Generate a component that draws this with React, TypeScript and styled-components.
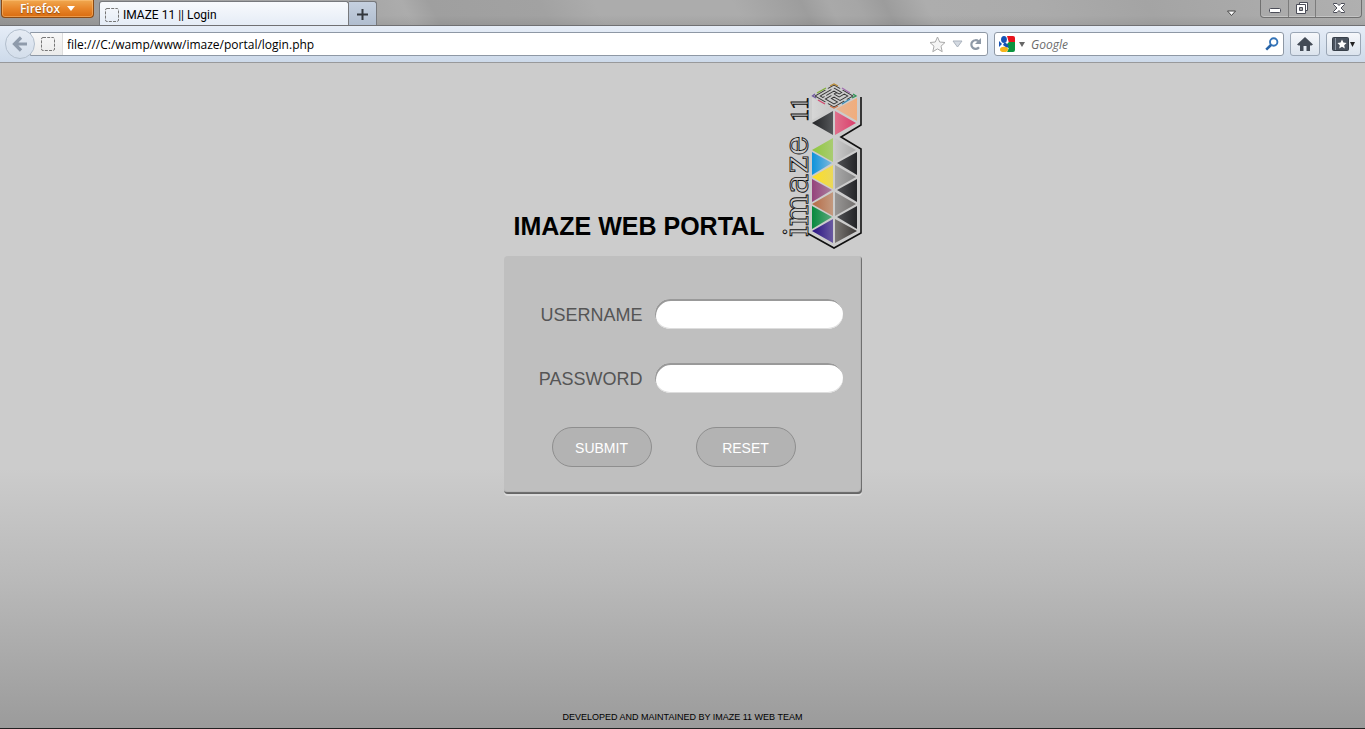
import React from "react";
import styled, { createGlobalStyle } from "styled-components";

const GlobalStyle = createGlobalStyle`
  * { box-sizing: border-box; }
  html, body { margin: 0; padding: 0; }
  body { font-family: "Liberation Sans", Arial, sans-serif; color: #000; }
  button, input { font: inherit; margin: 0; }
  svg { display: block; flex: none; overflow: visible; }
`;

const Window = styled.div`
  min-height: 100vh;
  display: flex;
  flex-direction: column;
`;

const TitleBar = styled.header`
  height: 26px;
  display: flex;
  align-items: flex-start;
  border-bottom: 1px solid #707073;
  font-family: "Open Sans", sans-serif;
  background:
    linear-gradient(to bottom, transparent 60%, rgba(0, 0, 0, 0.06)),
    linear-gradient(63deg, #9a9a9a 0%, #a8a8a8 28%, #acacac 30%, #9f9f9f 32%, #a2a2a2 40%, #acacac 44%,
      #acacac 54%, #9d9d9d 59%, #a9a9a9 61%, #a6a6a6 63%, #9c9c9c 65%, #adadad 68%, #ababab 76%, #a4a4a4 84%, #b0b0b0 100%);
`;

const FirefoxButton = styled.button`
  width: 93px;
  height: 18px;
  margin-left: 1px;
  padding: 0;
  display: flex;
  align-items: center;
  justify-content: center;
  gap: 7px;
  border: 1px solid #8a4a14;
  border-top: 0;
  border-radius: 0 0 4px 4px;
  background: linear-gradient(#f0a850, #e8862a 50%, #d96b10);
  box-shadow: inset 0 0 0 1px rgba(255, 200, 130, 0.5);
  color: #fff;
  font-size: 12px;
  line-height: 17px;
  font-weight: 600;
  text-shadow: 0 1px 1px #8a4a14;
`;

const Tab = styled.div`
  width: 250px;
  height: 24px;
  margin: 1px 0 0 5px;
  padding: 2px 5px 0;
  display: flex;
  align-items: center;
  gap: 4px;
  flex: none;
  border: 1px solid #77797d;
  border-bottom: 0;
  border-radius: 3px 3px 0 0;
  background: linear-gradient(#f8fafd, #e5ecf6);
  font-family: Roboto, sans-serif;
  font-size: 12px;
  line-height: 16px;
`;

const NewTab = styled.button`
  width: 28px;
  height: 24px;
  margin-top: 1px;
  padding: 1px 0 0;
  display: grid;
  place-items: center;
  border: 1px solid #77797d;
  border-left: 0;
  border-bottom: 0;
  border-radius: 0 3px 0 0;
  background: linear-gradient(#c5d0df, #b0bdcf);
`;

const Spacer = styled.div`
  flex: 1;
`;

const TabsMenu = styled.button`
  margin: 10px 23px 0 0;
  padding: 0;
  border: 0;
  background: none;
`;

const WindowControls = styled.div`
  display: flex;
  height: 18px;
  margin-right: 3px;
  border: 1px solid #707070;
  border-top: 0;
  border-radius: 0 0 4px 4px;
  box-shadow: inset 0 -1px 0 #c4c4c4;
`;

const ControlButton = styled.button<{ $width: number }>`
  width: ${(p) => p.$width}px;
  padding: 0;
  display: grid;
  place-items: center;
  border: 0;
  background: none;
  & + & { border-left: 1px solid #7c7c7c; }
`;

const Toolbar = styled.nav`
  height: 37px;
  padding: 0 4px 0 5px;
  display: flex;
  align-items: center;
  border-bottom: 1px solid #98999b;
  background: linear-gradient(#e6edf7, #cddaea);
  font-family: "Open Sans", sans-serif;
  font-size: 12px;
  line-height: 16px;
`;

const BackButton = styled.button`
  width: 30px;
  height: 30px;
  margin-right: -5px;
  padding: 0;
  display: grid;
  place-items: center;
  flex: none;
  position: relative;
  border: 1px solid #b3bfcd;
  border-radius: 50%;
  background: linear-gradient(#e6ecf4, #d3deeb);
`;

const AddressBar = styled.div`
  height: 24px;
  flex: 1;
  display: flex;
  align-items: center;
  border: 1px solid #8e98a5;
  border-radius: 0 3px 3px 0;
  background: #fff;
  overflow: hidden;
`;

const Identity = styled.div`
  width: 32px;
  height: 22px;
  padding-left: 10px;
  display: flex;
  align-items: center;
  border-right: 1px solid #dcdcdc;
  background: linear-gradient(#f8f8f8, #ebebeb);
`;

const BarInput = styled.input`
  flex: 1;
  min-width: 0;
  padding: 1px 0 0 4px;
  border: 0;
  outline: 0;
  background: none;
  color: #000;
  &::placeholder { color: #6c6c6c; opacity: 1; font-style: italic; }
`;

const IconButton = styled.button`
  padding: 0;
  border: 0;
  background: none;
`;

const AddressActions = styled.div`
  display: flex;
  align-items: center;
  gap: 6px;
  padding-right: 5px;
`;

const SearchBar = styled.div`
  width: 290px;
  height: 24px;
  margin: 0 6px;
  padding: 0 4px;
  display: flex;
  align-items: center;
  border: 1px solid #8e98a5;
  border-radius: 3px;
  background: #fff;
`;

const Engine = styled.button`
  padding: 0;
  margin-right: 2px;
  display: flex;
  align-items: center;
  gap: 4px;
  border: 0;
  background: none;
`;

const ToolButton = styled.button<{ $width: number }>`
  width: ${(p) => p.$width}px;
  height: 24px;
  padding: 0;
  display: flex;
  align-items: center;
  justify-content: center;
  gap: 1px;
  flex: none;
  border: 1px solid #9aa6b5;
  border-radius: 3px;
  background: linear-gradient(#f6f8fb, #dbe3ed);
  & + & { margin-left: 6px; }
`;

const Page = styled.main`
  flex: 1;
  display: flex;
  flex-direction: column;
  align-items: center;
  padding: 20px 16px 5px;
  border-bottom: 1px solid #222;
  background: linear-gradient(#ccc 0%, #ccc 61%, #b9b9b9 78%, #9b9b9b 100%);
`;

const Portal = styled.section`
  width: 100%;
  max-width: 358px;
`;

const Brand = styled.div`
  display: flex;
  justify-content: space-between;
  align-items: flex-end;
  height: 173px;
  padding: 0 0 7px 10px;
`;

const Heading = styled.h1`
  margin: 0 0 8px;
  font-size: 25px;
  line-height: 30px;
  font-weight: bold;
  white-space: nowrap;
`;

const Card = styled.form`
  padding: 43px 19px 27px 20px;
  border-radius: 4px;
  background: #bfbfbf;
  box-shadow: inset -1px -2px 1px #666, 0 2px 0 #dcdcdc;
`;

const Field = styled.div`
  display: flex;
  align-items: center;
  justify-content: flex-end;
  gap: 12px;
  margin-bottom: 34px;
`;

const Label = styled.label`
  padding-top: 2px;
  color: #555;
  font-size: 18px;
  line-height: 28px;
`;

const TextBox = styled.input`
  width: 188px;
  height: 30px;
  padding: 0 14px;
  border: 0;
  border-radius: 15px;
  outline: 0;
  background: #fff;
  box-shadow: inset 1px 2px 0 #999, inset 0 -1px 0 #ddd;
`;

const Actions = styled.div`
  display: flex;
  gap: 44px;
  padding-left: 28px;
`;

const PillButton = styled.button`
  width: 100px;
  height: 40px;
  padding: 2px 0 0;
  border: 1px solid #8e8e8e;
  border-radius: 20px;
  background: #b3b3b3;
  color: #fff;
  font-size: 14px;
  line-height: 16px;
`;

const Footer = styled.footer`
  margin-top: auto;
  font-size: 9px;
  line-height: 12px;
`;

const BlankPageIcon = () => (
  <svg width="14" height="14" viewBox="0 0 14 14" aria-hidden="true">
    <rect x=".5" y=".5" width="13" height="13" rx="1.5" fill="none" stroke="#777" strokeDasharray="3 1.2" />
  </svg>
);

const Caret = ({ width = 7, color = "#666" }: { width?: number; color?: string }) => (
  <svg width={width} height="5" viewBox="0 0 8 5" preserveAspectRatio="none" aria-hidden="true">
    <path d="M0 0H8L4 5Z" fill={color} />
  </svg>
);

/* Triangles of the tower: points plus the two ends of the fill. */
const tiles: [string, string, string][] = [
  ["28,15 28,37 48,26", "#d6d6d6", "#c8c8c8"],
  ["73,15 73,38 52,26", "#f1ad7c", "#e6b594"],
  ["28,40 49,28 49,52", "#222326", "#55575a"],
  ["51,28 51,52 72,40", "#e0708c", "#d93f6c"],
  ["28,67 49,55 49,79", "#8fc63d", "#a9cc72"],
  ["51,55 51,79 72,67", "#c9c9c9", "#a8a8a8"],
  ["28,69 28,92 48,80", "#0c93dc", "#7fb8dc"],
  ["73,69 73,92 53,80", "#232427", "#505154"],
  ["28,94 49,82 49,106", "#ffdf1f", "#ead85c"],
  ["51,82 51,106 72,94", "#a8a8a8", "#868686"],
  ["28,96 28,119 48,107", "#95437c", "#a97e9d"],
  ["73,96 73,119 53,107", "#232427", "#505154"],
  ["28,121 49,109 49,133", "#b66a45", "#c39a80"],
  ["51,109 51,133 72,121", "#989695", "#73706e"],
  ["28,123 28,146 48,134", "#07893e", "#5aa87b"],
  ["73,123 73,146 53,134", "#232427", "#505154"],
  ["28,148 49,136 49,160", "#271083", "#6a5aa0"],
  ["51,136 51,160 73,148", "#7b7774", "#3c3937"],
];

const ImazeLogo = () => (
  <svg width="78" height="166" viewBox="0 0 78 166" role="img" aria-label="imaze 11">
    <defs>
      {tiles.map(([points, from, to], i) => {
        const flip = points.startsWith("73");
        return (
          <linearGradient key={points} id={`tile${i}`} x1="0" x2="1" y1="0" y2="0">
            <stop offset="0" stopColor={flip ? to : from} />
            <stop offset="1" stopColor={flip ? from : to} />
          </linearGradient>
        );
      })}
    </defs>
    {tiles.map(([points], i) => (
      <polygon key={points} points={points} fill={`url(#tile${i})`} />
    ))}
    <path d="M77 14V42L57 54L77 66V150L50 165L23 150" fill="none" stroke="#111" strokeWidth="1.600" />
    <g transform="matrix(.86 .5 -.86 .5 50 1)" fill="none" stroke="#333" strokeWidth="1.100">
      <path d="M1 8V1H8M11 1H23V8M23 11V23H16M13 23H1V11" />
      <path d="M4 4H13V7H7V16M10 10H16V4H20V13H13V16H20V20H10V13M4 7V20H7V18M10 7V10" />
    </g>
    <g fill="none" strokeWidth="1.300">
      <path d="M46 3L50 1L54 3" stroke="#b88a36" />
      <path d="M33 10L42 5" stroke="#7fae35" />
      <path d="M58 5L66 10" stroke="#a06bb0" />
      <path d="M31 11L28.500 13L32 15" stroke="#7059a0" />
      <path d="M69 11L72 13L68 15" stroke="#2d9455" />
      <path d="M34 17L41 21" stroke="#d4476e" />
      <path d="M46 23L50 25L54 23" stroke="#cc7146" />
      <path d="M58 21L66 16" stroke="#3689b3" />
    </g>
    <g transform="translate(24 153) rotate(-90)" fill="#ccc" stroke="#111" strokeWidth=".9">
      <text x="-1" y="0" fontSize="34" fontFamily="DejaVu Serif, serif">imaze</text>
      <text x="114" y="0" fontSize="26" fontFamily="Liberation Serif, serif">11</text>
    </g>
  </svg>
);

export default function App() {
  return (
    <Window>
      <GlobalStyle />
      <TitleBar>
        <FirefoxButton>
          Firefox <Caret width={8} color="#fff" />
        </FirefoxButton>
        <Tab>
          <BlankPageIcon />
          IMAZE 11 || Login
        </Tab>
        <NewTab aria-label="New tab">
          <svg width="11" height="11" viewBox="0 0 11 11">
            <path d="M5.500 0V11M0 5.500H11" stroke="#33373d" strokeWidth="2" />
          </svg>
        </NewTab>
        <Spacer />
        <TabsMenu aria-label="List all tabs">
          <svg width="11" height="7" viewBox="0 0 11 7">
            <path d="M1.500 1H9.500L5.500 5.500Z" fill="#fff" stroke="#444" />
          </svg>
        </TabsMenu>
        <WindowControls>
          <ControlButton $width={27} aria-label="Minimize">
            <svg width="12" height="17" viewBox="0 0 12 17">
              <rect x=".5" y="8.500" width="11" height="4" rx="1" fill="#fff" stroke="#4b4d58" />
            </svg>
          </ControlButton>
          <ControlButton $width={27} aria-label="Restore">
            <svg width="12" height="17" viewBox="0 0 12 17">
              <g fill="#fff" stroke="#4b4d58">
                <path d="M3.500 2.500H11.500V10.500H3.500Z" />
                <path d="M.5 4.500H9.500V13.500H.5Z" />
                <path d="M3.500 7.500H6.500V10.500H3.500Z" fill="#aaa" />
              </g>
            </svg>
          </ControlButton>
          <ControlButton $width={46} aria-label="Close">
            <svg width="12" height="17" viewBox="0 0 12 17">
              <path d="M.5 3.500H4L6 5.500L8 3.500H11.500V4.500L8 8L11.500 11.500V12.500H8L6 10.500L4 12.500H.5V11.500L4 8L.5 4.500Z" fill="#fff" stroke="#4b4d58" />
            </svg>
          </ControlButton>
        </WindowControls>
      </TitleBar>

      <Toolbar>
        <BackButton aria-label="Back">
          <svg width="16" height="16" viewBox="0 0 16 16">
            <path d="M9 1.500L2.500 8L9 14.500M3 8H15" fill="none" stroke="#8f9bab" strokeWidth="3.200" />
          </svg>
        </BackButton>
        <AddressBar>
          <Identity>
            <BlankPageIcon />
          </Identity>
          <BarInput aria-label="Address" defaultValue="file:///C:/wamp/www/imaze/portal/login.php" />
          <AddressActions>
            <IconButton aria-label="Bookmark this page">
              <svg width="17" height="17" viewBox="0 0 17 17">
                <path d="M8.500 1L10.700 6L16 6.500L12 10.200L13.200 15.700L8.500 12.900L3.800 15.700L5 10.200L1 6.500L6.300 6Z" fill="#f4f4f4" stroke="#a9a9a9" strokeLinejoin="round" />
              </svg>
            </IconButton>
            <IconButton aria-label="Show history">
              <svg width="11" height="8" viewBox="0 0 11 8">
                <path d="M1 1H10L5.500 7Z" fill="#d4dae2" stroke="#aab2bd" />
              </svg>
            </IconButton>
            <IconButton aria-label="Reload">
              <svg width="13" height="13" viewBox="0 0 13 13">
                <path d="M10 9.200A4.300 4.300 0 1 1 9.500 3.300" fill="none" stroke="#8e99a6" strokeWidth="2.200" />
                <path d="M12 0V6H6Z" fill="#8e99a6" />
              </svg>
            </IconButton>
          </AddressActions>
        </AddressBar>
        <SearchBar>
          <Engine aria-label="Search engine">
            <svg width="16" height="16" viewBox="0 0 16 16">
              <path d="M8 0H14Q16 0 16 2V7H10Z" fill="#e8131c" />
              <path d="M10 6H16V14Q16 16 14 16H8L11 10Z" fill="#0b9440" />
              <path d="M0 5L3 8L0 11Z" fill="#1553b5" />
              <path d="M10 6L13 10L11 14L7 9Z" fill="#0b9440" />
              <ellipse cx="5" cy="3.500" rx="2.900" ry="3.500" fill="#1553b5" />
              <path d="M5 7L7 7L10 10L8 12L4 9Z" fill="#1553b5" />
              <ellipse cx="5" cy="13.400" rx="4" ry="2.600" fill="#f5b51b" />
            </svg>
            <Caret width={6} />
          </Engine>
          <BarInput aria-label="Search" placeholder="Google" />
          <IconButton aria-label="Search">
            <svg width="14" height="14" viewBox="0 0 14 14">
              <circle cx="8.700" cy="5" r="3.700" fill="#fff" stroke="#3474b8" strokeWidth="1.900" />
              <path d="M6 8L1.200 12.600" stroke="#2763a8" strokeWidth="2.600" />
            </svg>
          </IconButton>
        </SearchBar>
        <ToolButton $width={30} aria-label="Home">
          <svg width="16" height="14" viewBox="0 0 16 14">
            <path d="M8 0L16 7.500L14.500 8.500H13V14H9.500V9H6.500V14H3V8.500H1.500L0 7.500Z" fill="#434b56" />
          </svg>
        </ToolButton>
        <ToolButton $width={35} aria-label="Bookmarks">
          <svg width="17" height="14" viewBox="0 0 17 14">
            <rect x=".5" y=".5" width="16" height="13" rx="1" fill="#4a535f" stroke="#373f49" />
            <path d="M3.500 1V13" stroke="#8d97a4" />
            <path d="M10 2.500L11.400 5.600L14.600 6L12.200 8.200L12.800 11.500L10 9.800L7.200 11.500L7.800 8.200L5.400 6L8.600 5.600Z" fill="#fff" />
          </svg>
          <Caret width={5} color="#222" />
        </ToolButton>
      </Toolbar>

      <Page>
        <Portal>
          <Brand>
            <Heading>IMAZE WEB PORTAL</Heading>
            <ImazeLogo />
          </Brand>
          <Card onSubmit={(e) => e.preventDefault()}>
            <Field>
              <Label htmlFor="username">USERNAME</Label>
              <TextBox id="username" type="text" />
            </Field>
            <Field>
              <Label htmlFor="password">PASSWORD</Label>
              <TextBox id="password" type="password" />
            </Field>
            <Actions>
              <PillButton type="submit">SUBMIT</PillButton>
              <PillButton type="reset">RESET</PillButton>
            </Actions>
          </Card>
        </Portal>
        <Footer>DEVELOPED AND MAINTAINED BY IMAZE 11 WEB TEAM</Footer>
      </Page>
    </Window>
  );
}
